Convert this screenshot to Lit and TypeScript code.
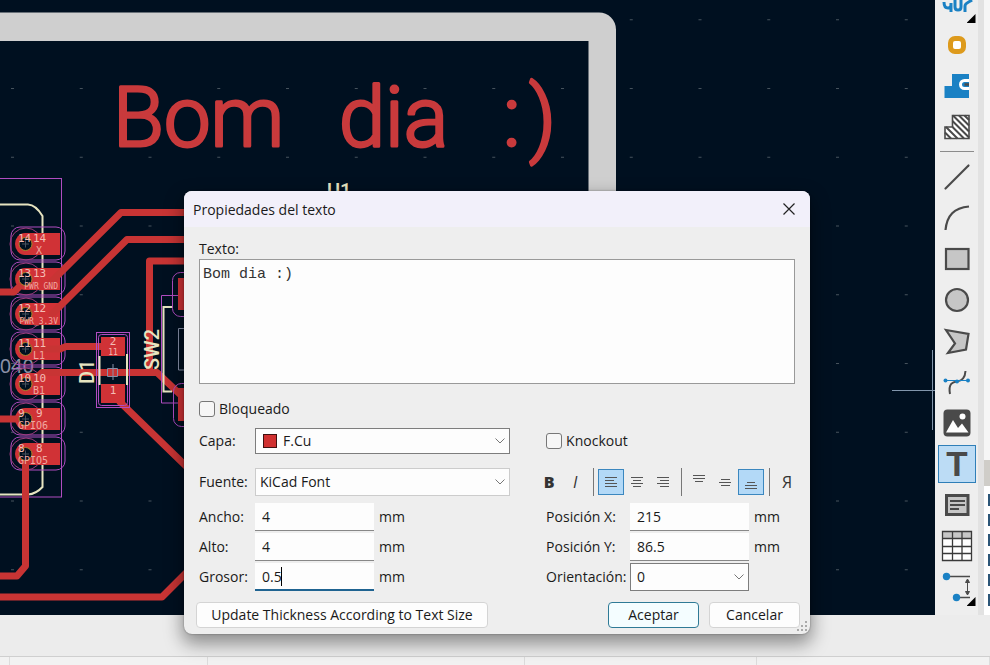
import { LitElement, html, svg, css } from "lit";
import { customElement } from "lit/decorators.js";
import { classMap } from "lit/directives/class-map.js";

const INK = "#4a4a4a";
const BLUE = "#1a81c4";

const toolIcons: Record<string, unknown> = {
  tune: svg`<path d="M0 11c0 4 1 6 4 6s3-2 3-5v9M11 8v8c0 4 6 4 6 0V8M21 21v-6c0-3 4-4 7-6" fill="none" stroke="${BLUE}" stroke-width="3"/>`,
  via: svg`<rect x="6.500" y="6.500" width="13" height="13" rx="4.500" fill="#fff" stroke="#dd9a1c" stroke-width="5"/>`,
  zone: svg`<path d="M8 1h17v24H.5V13H8z" fill="${BLUE}"/><path d="M25 7.500h-4.500a4 4 0 1 0 0 8H25" fill="none" stroke="#fff" stroke-width="3"/><path d="M20.500 11.500H25" stroke="${INK}" stroke-width="2.500"/>`,
  rule: svg`<path d="M8.500 1.500H25v23H1V13h7.500z" fill="#fff" stroke="${INK}" stroke-width="1.600"/><path d="M9 1.500 25 17.500M15 1.500l10 10M20.500 1.500l4.500 4.500M8.500 7 25 23.500M8.500 13l11.500 11.500M2 13l11.500 11.500M1 18.500l6 6" stroke="${INK}" stroke-width="2"/>`,
  line: svg`<path d="M1.500 24.500l23-23" stroke="${INK}" stroke-width="2.200" stroke-linecap="round"/>`,
  arc: svg`<path d="M1.500 25C3 10 10 3 25 1.500" fill="none" stroke="${INK}" stroke-width="2.200"/>`,
  rect: svg`<rect x="2" y="3" width="22.500" height="20" fill="#c6c6c6" stroke="${INK}" stroke-width="2.200"/>`,
  circle: svg`<circle cx="13" cy="13" r="11" fill="#c6c6c6" stroke="${INK}" stroke-width="2.200"/>`,
  polygon: svg`<path d="M2 2l22.500 4L22 21.500 4 25l7-9.500z" fill="#c6c6c6" stroke="${INK}" stroke-width="2.200"/>`,
  bezier: svg`<path d="M6 25C4 14 9 13 13 12.500S21 10 21.500 2" fill="none" stroke="${INK}" stroke-width="2"/><path d="M2 11.500h22" stroke="${BLUE}"/><circle cx="1.500" cy="11.500" r="2" fill="${BLUE}"/><circle cx="13" cy="12.500" r="2" fill="${BLUE}"/><circle cx="24" cy="11.500" r="2" fill="${BLUE}"/>`,
  image: svg`<rect x="-.5" y="-.5" width="27" height="27" rx="4" fill="${INK}"/><path d="M2 22.500L9 10l5 8 4-4.500 6.500 9z" fill="#fff"/><circle cx="18.500" cy="6.500" r="3" fill="#fff"/>`,
  text: svg`<text x="13" y="25" font-family="Liberation Sans, sans-serif" font-weight="700" font-size="35" text-anchor="middle" fill="${INK}">T</text>`,
  textbox: svg`<rect x="2.500" y="3.500" width="21.500" height="19" fill="#c6c6c6" stroke="${INK}" stroke-width="3"/><path d="M6 9h15M6 13h15M6 17h9" stroke="${INK}" stroke-width="2"/>`,
  table: svg`<rect x="-1.500" y="-1.500" width="29" height="29" fill="#fff"/><rect x="-1.500" y="-1.500" width="29" height="7" fill="#c6c6c6"/><path d="M-1.500-1.500h29v29h-29zM-1.500 5.500h29M-1.500 13.500h29M-1.500 20.500h29M8.500-1.500v29M18-1.500v29" fill="none" stroke="#3a3a3a" stroke-width="1.300"/>`,
  dimension: svg`<path d="M3 2.500h23M13 23.500h13" stroke="${INK}" stroke-width="1.500"/><path d="M23.500 6v14M21.500 8.500l2-3.500 2 3.500zM21.500 17.500l2 3.500 2-3.500z" stroke="${INK}" fill="${INK}"/><circle cx="2.500" cy="2.500" r="3.700" fill="${BLUE}"/><circle cx="12.500" cy="23.500" r="3.700" fill="${BLUE}"/>`,
};

const tools: Array<{ id: string; label: string; more?: boolean; active?: boolean } | null> = [
  { id: "tune", label: "Ajustar longitud", more: true },
  { id: "via", label: "Vía" },
  { id: "zone", label: "Zona rellena" },
  { id: "rule", label: "Área de reglas" },
  null,
  { id: "line", label: "Línea" },
  { id: "arc", label: "Arco" },
  { id: "rect", label: "Rectángulo" },
  { id: "circle", label: "Círculo" },
  { id: "polygon", label: "Polígono" },
  { id: "bezier", label: "Curva" },
  { id: "image", label: "Imagen" },
  { id: "text", label: "Texto", active: true },
  { id: "textbox", label: "Cuadro de texto" },
  { id: "table", label: "Tabla" },
  { id: "dimension", label: "Cota", more: true },
];

@customElement("tool-bar")
class ToolBar extends LitElement {
  static styles = css`
    :host { display: block; overflow: hidden; background: #eee; }
    .list { display: flex; flex-direction: column; align-items: center; gap: 3px; margin-top: -15px; }
    .tool {
      position: relative; box-sizing: border-box; width: 38px; height: 38px; padding: 0; flex: none;
      display: flex; align-items: center; justify-content: center;
      border: 1px solid transparent; background: none;
    }
    .active { background: #bcdcf5; border-color: #2f7fb8; }
    .icon { width: 26px; height: 26px; overflow: visible; }
    .more { position: absolute; right: -1px; bottom: -1px; width: 9px; height: 9px; background: #000; clip-path: polygon(100% 0, 100% 100%, 0 100%); }
    .rule { width: 34px; height: 1px; margin: 2px 0 3px; border: 0; background: #8c8c8c; }
  `;
  render() {
    return html`<div class="list">
      ${tools.map((t) =>
        t
          ? html`<button class=${classMap({ tool: true, active: !!t.active })} aria-label=${t.label}>
              <svg class="icon" viewBox="0 0 26 26">${toolIcons[t.id]}</svg>
              ${t.more ? html`<span class="more"></span>` : ""}
            </button>`
          : html`<hr class="rule" />`
      )}
    </div>`;
  }
}

const pads = [
  { n: "14", net: "X", y: 244 },
  { n: "13", net: "PWR_GND", y: 279 },
  { n: "12", net: "PWR_3.3V", y: 314 },
  { n: "11", net: "L1", y: 349 },
  { n: "10", net: "B1", y: 384 },
  { n: "9", net: "GPIO6", y: 419 },
  { n: "8", net: "GPIO5", y: 454 },
];

@customElement("board-canvas")
class BoardCanvas extends LitElement {
  static styles = css`
    :host { display: block; overflow: hidden; background: #001020; }
    .board { display: block; width: 100%; height: 100%; }
    .copper { fill: none; stroke: #c83434; stroke-width: 7; stroke-linejoin: round; stroke-linecap: round; }
    .pad { fill: #d03236; }
    .yard { fill: none; stroke: #b04cc0; stroke-width: 1; }
    .ring { fill: none; stroke: #a03c80; stroke-width: 1; }
    .silk { fill: none; stroke: #e6e4c0; stroke-width: 2; }
    .fab { fill: none; stroke: #8790a8; stroke-width: 1; }
    .headline { font: 300 83px Roboto, sans-serif; fill: #c93a3c; stroke: #c93a3c; stroke-width: 3; stroke-linejoin: round; }
    .ref { font: 500 20px Roboto, sans-serif; fill: #e6e4c0; }
    .value { font: 20px "Noto Sans", sans-serif; fill: #8a90a6; text-anchor: end; }
    .num { font: 11px "DejaVu Sans Mono", monospace; fill: #f4bcb4; }
    .net { font: 10px "DejaVu Sans Mono", monospace; fill: #f0a8a0; text-anchor: end; }
    .small { font-size: 8px; }
    .mid { text-anchor: middle; }
  `;
  render() {
    return html`<svg class="board" role="img" aria-label="Placa de circuito">
      <defs>
        <pattern id="grid" x="11" y="88" width="68.750" height="68.750" patternUnits="userSpaceOnUse">
          <rect width="3" height="1" fill="#46525c" />
        </pattern>
      </defs>
      <rect width="100%" height="100%" fill="url(#grid)" />
      <path d="M-2 12.500H599a17 17 0 0 1 17 17V660H588.500V41H-2z" fill="#cfcfcf" />
      <text class="headline" x="113" y="146">Bom</text>
      <text class="headline" x="339" y="146">dia</text>
      <text class="headline" x="503" y="146">:</text>
      <text class="headline" x="529" y="146">)</text>
      <text class="ref" x="327" y="198">U1</text>
      <rect class="yard" x="-5" y="178.500" width="66.500" height="318.500" />
      <text class="value" x="34" y="373">040</text>
      <path class="silk" d="M-2 204.500H28Q36 205 42.500 216V487Q36 494 28 494.500H-2" />
      ${pads.map(
        (p) => svg`
          <rect class="yard" x="11" y="${p.y - 17}" width="54" height="33" rx="9"/>
          <circle class="ring" cx="26" cy="${p.y}" r="16"/>
          <path class="pad" d="M25 ${p.y - 11}H60V${p.y + 11}H25A10 11 0 0 1 25 ${p.y - 11}z"/>`
      )}
      <path class="copper" d="M192 212.500H121L50 283M192 239.500H127L52 314M192 261H149.500V372M-4 292H14L25 281M25 349H60L66 346.500H113M30 384L42 372.500H157L186 400M-4 419H25M120 402L190 470M25.500 454V566L17 576H-4M-4 597H162L190 569" />
      ${pads.map(
        (p) => svg`
          <circle cx="25.500" cy="${p.y}" r="6.500" fill="#001020" stroke="#a8832c" stroke-width="1"/>
          <path d="M22 ${p.y}h7M25.500 ${p.y - 3.5}v7" stroke="#46505c"/>
          <text class="num" x="18" y="${p.y - 2}">${p.n}</text>
          <text class="num" x="${p.n.length > 1 ? 33 : 36}" y="${p.y - 2}">${p.n}</text>
          <text class="net ${p.net.length > 5 ? "small" : ""} ${p.net.length < 3 ? "mid" : ""}" x="${p.net.length < 3 ? 39 : p.net.length > 5 ? 58 : 48}" y="${p.y + 10}">${p.net}</text>`
      )}
      <rect class="yard" x="96.500" y="332.500" width="33" height="75" />
      <rect class="yard" x="98.500" y="334.500" width="29" height="71" rx="3" />
      <rect class="pad" x="101" y="337" width="24" height="19" />
      <rect class="pad" x="101" y="384" width="24" height="19" />
      <path class="silk" d="M99.500 356V385M127 354V385" />
      <path class="fab" d="M107.500 368.500h10v8h-10zM113 364v16" />
      <text class="num mid" x="113" y="345">2</text>
      <text class="num small mid" x="113" y="355">11</text>
      <text class="num mid" x="113" y="394">1</text>
      <text class="ref" x="-384" y="94" transform="rotate(-90)">D1</text>
      <text class="ref" x="-370" y="159" transform="rotate(-90)">SW2</text>
      <path class="yard" d="M190 295.500H161.500V403H190" />
      <path class="silk" d="M173 307H163.500V391.500H172" />
      <path class="fab" d="M190 328.500H178.500V370H190" />
      <rect class="yard" x="172.500" y="272.500" width="30" height="44" rx="8" />
      <rect class="pad" x="178" y="278" width="20" height="32" />
      <rect class="yard" x="173.500" y="383.500" width="30" height="43" rx="8" />
      <rect class="pad" x="178" y="388" width="20" height="33" />
      <path d="M892 390.500H935M932.500 350V430" stroke="#8296ac" />
    </svg>`;
  }
}

const alignIcon = (d: string) => html`<svg class="glyph" viewBox="0 0 16 16"><path d=${d} stroke="#555" /></svg>`;

@customElement("text-dialog")
class TextDialog extends LitElement {
  static styles = css`
    :host {
      display: block; border-radius: 8px; background: #eee; color: #1a1a1a; overflow: hidden;
      box-shadow: 0 8px 18px 2px rgba(0, 0, 0, 0.4), 0 0 2px rgba(0, 0, 0, 0.4);
      font: 14px/20px "Open Sans", "Noto Sans", sans-serif;
    }
    button, input, select { font: inherit; color: inherit; box-sizing: border-box; margin: 0; }
    .title { display: flex; align-items: center; justify-content: space-between; height: 36px; padding: 0 12px 0 9px; background: #f2f0fa; }
    .heading { font: inherit; line-height: 22px; padding-top: 2px; margin: 0; }
    .close { border: 0; background: none; padding: 0; width: 18px; height: 18px; display: flex; align-items: center; justify-content: center; }
    .body { padding: 12px 15px 0; }
    .label { display: block; }
    .area {
      display: block; box-sizing: border-box; width: 100%; height: 125px; margin: 0 0 15px; padding: 6px 3px;
      border: 1px solid #999; background: #fdfdfd; color: #333; resize: none; outline: none;
      font: 15px/18px "Liberation Mono", monospace;
    }
    .check { display: flex; align-items: center; gap: 4px; height: 20px; line-height: 22px; }
    .box { appearance: none; width: 16px; height: 16px; border: 1px solid #777; border-radius: 3px; background: #f6f6f6; }
    .columns { display: grid; grid-template-columns: 5fr 4fr; gap: 36px; margin-top: 8px; }
    .fields { display: grid; align-content: start; align-items: center; grid-template-rows: 39px 33px 28px 28px 28px; row-gap: 2px; }
    .left { grid-template-columns: 56px 119px 1fr; }
    .right { grid-template-columns: 84px 119px 1fr; }
    .wide { grid-column: 2 / -1; }
    .full { grid-column: 1 / -1; }
    .first { margin-bottom: 12px; }
    .second { margin-bottom: 5px; }
    .pick { position: relative; display: flex; align-items: center; height: 28px; }
    .layer { height: 26px; }
    .choice { appearance: none; width: 100%; height: 100%; padding: 0 24px 0 4px; border: 1px solid #ccc; border-radius: 0; background: #fdfdfd; outline: none; }
    .dark { border-color: #7d7d7d; }
    .swatched { padding-left: 27px; }
    .angle { padding-left: 6px; }
    .swatch { position: absolute; left: 8px; top: 6px; width: 12px; height: 12px; border: 1px solid #401010; background: #d03030; }
    .chevron { position: absolute; right: 5px; width: 10px; height: 6px; pointer-events: none; }
    .entry { position: relative; display: flex; height: 28px; }
    .value { width: 100%; height: 28px; padding: 0 7px; border: 0; border-bottom: 1px solid #888; border-radius: 0; background: #fdfdfd; outline: none; }
    .focus { border-bottom: 2px solid #1f6391; }
    .caret { position: absolute; left: 26px; top: 4px; width: 1px; height: 19px; background: #000; }
    .unit { padding-left: 5px; }
    .format { display: flex; align-items: center; margin-left: -10px; height: 28px; }
    .tog { width: 26px; height: 26px; padding: 0; border: 1px solid transparent; background: none; display: flex; align-items: center; justify-content: center; color: #333; font-size: 16px; flex: none; }
    .on { background: #b3d9f7; border-color: #3b87bf; }
    .bold { font-weight: 800; }
    .italic { font-style: italic; }
    .bar { flex: none; width: 1px; height: 28px; margin: 0 4px 0 5px; background: #777; }
    .glyph { width: 16px; height: 16px; }
    .actions { display: flex; gap: 10px; padding: 11px 10px 6px 12px; }
    .act { height: 26px; padding: 0; border: 1px solid #d4d4d4; border-radius: 4px; background: #fdfdfd; }
    .update { width: 292px; margin-right: auto; }
    .small { width: 91px; }
    .ok { border-color: #2f7a96; background: #f4fdff; }
    .grip { position: absolute; right: 2px; bottom: 2px; width: 12px; height: 12px; }
  `;
  private chevron() {
    return html`<svg class="chevron" viewBox="0 0 10 6"><path d="M.5.5L5 5 9.500.5" fill="none" stroke="#777" /></svg>`;
  }
  render() {
    return html`
      <header class="title">
        <h1 class="heading">Propiedades del texto</h1>
        <button class="close" aria-label="Cerrar">
          <svg width="12" height="12" viewBox="0 0 12 12"><path d="M.5.5l11 11M11.500.5l-11 11" stroke="#222" stroke-width="1.200" /></svg>
        </button>
      </header>
      <div class="body">
        <label class="label" for="texto">Texto:</label>
        <textarea class="area" id="texto" spellcheck="false" .value=${"Bom dia :)"}></textarea>
        <label class="check"><input class="box" type="checkbox" />Bloqueado</label>
        <div class="columns">
          <div class="fields left">
            <label for="capa" class="first">Capa:</label>
            <div class="pick layer wide first">
              <select class="choice dark swatched" id="capa"><option>F.Cu</option></select>
              <span class="swatch"></span>${this.chevron()}
            </div>
            <label for="fuente" class="second">Fuente:</label>
            <div class="pick wide second">
              <select class="choice" id="fuente"><option>KiCad Font</option></select>${this.chevron()}
            </div>
            <label for="ancho">Ancho:</label>
            <div class="entry"><input class="value" id="ancho" value="4" /></div>
            <span class="unit">mm</span>
            <label for="alto">Alto:</label>
            <div class="entry"><input class="value" id="alto" value="4" /></div>
            <span class="unit">mm</span>
            <label for="grosor">Grosor:</label>
            <div class="entry"><input class="value focus" id="grosor" value="0.5" /><span class="caret"></span></div>
            <span class="unit">mm</span>
          </div>
          <div class="fields right">
            <label class="check full first"><input class="box" type="checkbox" />Knockout</label>
            <div class="format full second">
              <button class="tog bold" aria-label="Negrita">B</button>
              <button class="tog italic" aria-label="Cursiva">I</button>
              <span class="bar"></span>
              <button class="tog on" aria-label="Alinear a la izquierda">${alignIcon("M2 3.500h12M2 6.500h9M2 9.500h12M2 12.500h12")}</button>
              <button class="tog" aria-label="Centrar">${alignIcon("M2 3.500h12M4 6.500h8M2 9.500h12M4 12.500h8")}</button>
              <button class="tog" aria-label="Alinear a la derecha">${alignIcon("M2 3.500h12M5 6.500h9M2 9.500h12M5 12.500h9")}</button>
              <span class="bar"></span>
              <button class="tog" aria-label="Arriba">${alignIcon("M2 1.500h12M2 4.500h12M4 7.500h8")}</button>
              <button class="tog" aria-label="Medio">${alignIcon("M4 5.500h9M2 8.500h12M4 11.500h9")}</button>
              <button class="tog on" aria-label="Abajo">${alignIcon("M4 8.500h8M2 11.500h12M2 14.500h12")}</button>
              <span class="bar"></span>
              <button class="tog" aria-label="Reflejar">Я</button>
            </div>
            <label for="posx">Posición X:</label>
            <div class="entry"><input class="value" id="posx" value="215" /></div>
            <span class="unit">mm</span>
            <label for="posy">Posición Y:</label>
            <div class="entry"><input class="value" id="posy" value="86.5" /></div>
            <span class="unit">mm</span>
            <label for="giro">Orientación:</label>
            <div class="pick"><select class="choice dark angle" id="giro"><option>0</option></select>${this.chevron()}</div>
          </div>
        </div>
      </div>
      <footer class="actions">
        <button class="act update">Update Thickness According to Text Size</button>
        <button class="act small ok">Aceptar</button>
        <button class="act small">Cancelar</button>
      </footer>
      <svg class="grip" viewBox="0 0 12 12"><path d="M9 1h2v2H9zM9 5h2v2H9zM5 5h2v2H5zM9 9h2v2H9zM5 9h2v2H5zM1 9h2v2H1z" fill="#aaa" /></svg>
    `;
  }
}

@customElement("app-root")
class AppRoot extends LitElement {
  static styles = css`
    :host { position: relative; display: grid; grid-template-rows: minmax(0, 1fr) auto; height: 100vh; overflow: hidden; background: #ececec; }
    .work { display: grid; grid-template-columns: minmax(0, 1fr) 43px 6px 6px; min-height: 0; }
    .canvas, .tools { min-height: 0; }
    .split { background: #e2e2e2; }
    .panel { display: flex; flex-direction: column; background: #f6f6f6; overflow: hidden; }
    .tab { height: 26px; margin-top: 460px; background: #cfcdc8; flex: none; }
    .layers { flex: 1; display: flex; flex-direction: column; align-items: flex-end; gap: 8px; padding-top: 8px; background: #fff; }
    .chip { width: 2px; height: 12px; background: #2c5678; flex: none; }
    .status { height: 41px; border-bottom: 1px solid #cfcfcf; }
    .cells { display: flex; height: 8px; background: #f2f2f2; }
    .cell { box-sizing: border-box; border-right: 1px solid #dcdcdc; flex: 321 1 0; }
    .edge { flex: 0 0 10px; }
    .lead { flex: 201 1 0; }
    .short { flex: 236 1 0; }
    .dialog { position: absolute; left: 184px; top: 191px; right: 180px; }
  `;
  render() {
    return html`
      <main class="work">
        <board-canvas class="canvas"></board-canvas>
        <tool-bar class="tools"></tool-bar>
        <div class="split"></div>
        <aside class="panel">
          <div class="tab"></div>
          <div class="layers">${[0, 1, 2, 3, 4, 5].map(() => html`<span class="chip"></span>`)}</div>
        </aside>
      </main>
      <footer>
        <div class="status"></div>
        <div class="cells">
          <span class="cell edge"></span><span class="cell lead"></span><span class="cell"></span><span class="cell short"></span><span class="cell short"></span>
        </div>
      </footer>
      <text-dialog class="dialog" role="dialog" aria-label="Propiedades del texto"></text-dialog>
    `;
  }
}
